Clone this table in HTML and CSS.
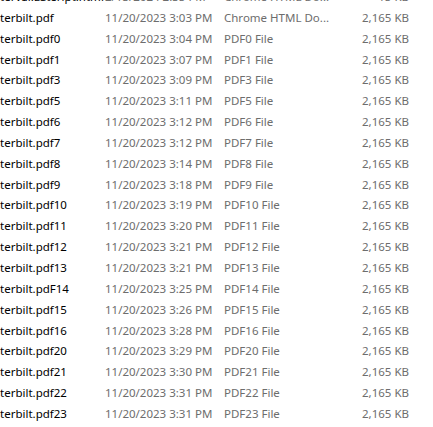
FILE: index.html
```html
<!DOCTYPE html>
<html>
<head>
<meta charset="utf-8">
<link rel="stylesheet" href="styles.css">
</head>
<body>
<div class="list">
  <div class="row"><span class="name">terval.Lateript.html</span><span class="date">2/13/2024 2:35 PM</span><span class="type">Chrome HTML Do...</span><span class="size">15 KB</span></div>
  <div class="row"><span class="name">terbilt.pdf</span><span class="date">11/20/2023 3:03 PM</span><span class="type">Chrome HTML Do...</span><span class="size">2,165 KB</span></div>
  <div class="row"><span class="name">terbilt.pdf0</span><span class="date">11/20/2023 3:04 PM</span><span class="type">PDF0 File</span><span class="size">2,165 KB</span></div>
  <div class="row"><span class="name">terbilt.pdf1</span><span class="date">11/20/2023 3:07 PM</span><span class="type">PDF1 File</span><span class="size">2,165 KB</span></div>
  <div class="row"><span class="name">terbilt.pdf3</span><span class="date">11/20/2023 3:09 PM</span><span class="type">PDF3 File</span><span class="size">2,165 KB</span></div>
  <div class="row"><span class="name">terbilt.pdf5</span><span class="date">11/20/2023 3:11 PM</span><span class="type">PDF5 File</span><span class="size">2,165 KB</span></div>
  <div class="row"><span class="name">terbilt.pdf6</span><span class="date">11/20/2023 3:12 PM</span><span class="type">PDF6 File</span><span class="size">2,165 KB</span></div>
  <div class="row"><span class="name">terbilt.pdf7</span><span class="date">11/20/2023 3:12 PM</span><span class="type">PDF7 File</span><span class="size">2,165 KB</span></div>
  <div class="row"><span class="name">terbilt.pdf8</span><span class="date">11/20/2023 3:14 PM</span><span class="type">PDF8 File</span><span class="size">2,165 KB</span></div>
  <div class="row"><span class="name">terbilt.pdf9</span><span class="date">11/20/2023 3:18 PM</span><span class="type">PDF9 File</span><span class="size">2,165 KB</span></div>
  <div class="row"><span class="name">terbilt.pdf10</span><span class="date">11/20/2023 3:19 PM</span><span class="type">PDF10 File</span><span class="size">2,165 KB</span></div>
  <div class="row"><span class="name">terbilt.pdf11</span><span class="date">11/20/2023 3:20 PM</span><span class="type">PDF11 File</span><span class="size">2,165 KB</span></div>
  <div class="row"><span class="name">terbilt.pdf12</span><span class="date">11/20/2023 3:21 PM</span><span class="type">PDF12 File</span><span class="size">2,165 KB</span></div>
  <div class="row"><span class="name">terbilt.pdf13</span><span class="date">11/20/2023 3:21 PM</span><span class="type">PDF13 File</span><span class="size">2,165 KB</span></div>
  <div class="row"><span class="name">terbilt.pdF14</span><span class="date">11/20/2023 3:25 PM</span><span class="type">PDF14 File</span><span class="size">2,165 KB</span></div>
  <div class="row"><span class="name">terbilt.pdf15</span><span class="date">11/20/2023 3:26 PM</span><span class="type">PDF15 File</span><span class="size">2,165 KB</span></div>
  <div class="row"><span class="name">terbilt.pdf16</span><span class="date">11/20/2023 3:28 PM</span><span class="type">PDF16 File</span><span class="size">2,165 KB</span></div>
  <div class="row"><span class="name">terbilt.pdf20</span><span class="date">11/20/2023 3:29 PM</span><span class="type">PDF20 File</span><span class="size">2,165 KB</span></div>
  <div class="row"><span class="name">terbilt.pdf21</span><span class="date">11/20/2023 3:30 PM</span><span class="type">PDF21 File</span><span class="size">2,165 KB</span></div>
  <div class="row"><span class="name">terbilt.pdf22</span><span class="date">11/20/2023 3:31 PM</span><span class="type">PDF22 File</span><span class="size">2,165 KB</span></div>
  <div class="row"><span class="name">terbilt.pdf23</span><span class="date">11/20/2023 3:31 PM</span><span class="type">PDF23 File</span><span class="size">2,165 KB</span></div>
</div>
</body>
</html>
```
FILE: styles.css
```css
html, body {
  margin: 0;
  padding: 0;
  background: #ffffff;
  overflow: hidden;
  width: 433px;
  height: 427px;
}
.list {
  margin-top: -13px;
  font-family: "Noto Sans", "Open Sans", sans-serif;
  font-size: 11.5px;
}
.row {
  display: grid;
  grid-template-columns: 105px 119px 110px 75px;
  height: 20.85px;
  line-height: 20.85px;
  white-space: nowrap;
}
.row span {
  overflow: hidden;
}
.name {
  color: #000000;
}
.date, .type, .size {
  color: #6d6d6d;
}
.size {
  text-align: right;
}
```
